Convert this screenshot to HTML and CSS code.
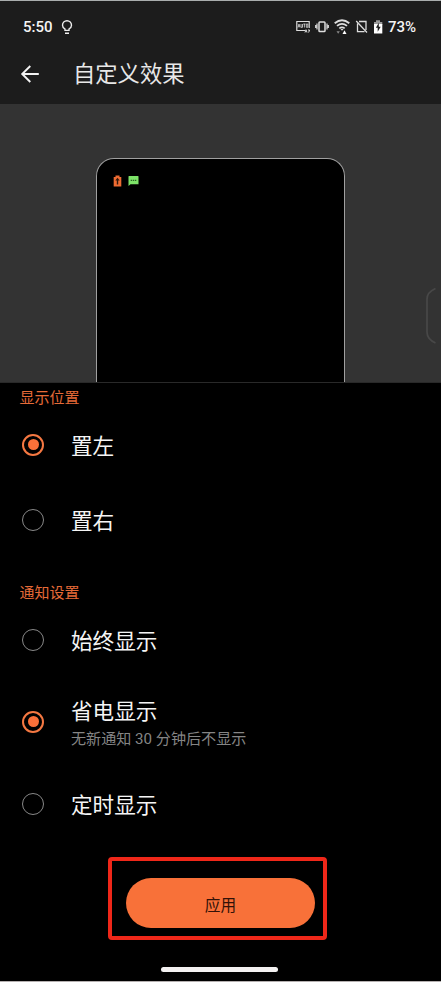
FILE: index.html
```html
<!DOCTYPE html>
<html lang="zh-CN">
<head>
<meta charset="utf-8">
<title>自定义效果</title>
<link rel="stylesheet" href="styles.css">
</head>
<body>
<div class="screen">
  <header class="header">
    <div class="status">
      <span class="clock">5:50</span>
      <svg class="bulb" width="12" height="15" viewBox="0 0 12 15" fill="none" stroke="#eee" stroke-width="1.4"><path d="M4 10.4V9C2.400 8.100 1.500 6.800 1.500 5.200a4.500 4.500 0 0 1 9 0C10.500 6.800 9.600 8.100 8 9v1.400zM4 13.300h4"/></svg>
      <svg class="tray" width="90" height="18" viewBox="0 0 90 18" fill="none" stroke="#ddd">
        <path d="M10 12.500H1.800V3.500H14.200V10" stroke-width="1.200"/>
        <path d="M3 9.500l1-3.500 1 3.500M3.500 8.300h1M6 6v3.300h1.500V6M8.300 6h2.200M9.400 6v3.500M11.300 6h1.500v3.300h-1.500z" stroke-width=".8"/>
        <path d="M10 14.500l1-2.800 1 2.800M13 12h1.600l-1 2.500" stroke-width="1"/>
        <rect x="24" y="4" width="6" height="9.500" rx=".8" stroke-width="1.500"/>
        <path d="M22 5.500v6M32 5.500v6M20.700 7v3M33.300 7v3" stroke-width="1.200"/>
        <path d="M39.700 5.200q7.300-6 14.600 0M42 7.900q5-4 10 0M44.300 10.400q2.700-2 5.400 0" stroke-width="1.800"/>
        <path d="M45.500 11l1.500 1.800 1.500-1.800z" fill="#ddd" stroke="none"/>
        <path d="M41.500 13.300h3.400l-1.700 2.400z" fill="#888" stroke="none"/>
        <path d="M47.500 16l2-3.700 2 3.700z" fill="#fff" stroke="none"/>
        <path d="M64 3.500H71v8.500M69.500 13.600h-7V5.500M61.200 3L72 14.500" stroke-width="1.300"/>
        <path d="M79 4h2V2.200h4V4h2.300v3H79z" fill="#999" stroke="none"/>
        <path d="M79 6h8.300v9.500H79z" fill="#fff" stroke="none"/>
        <path d="M83.800 4.800L80.900 9.700h1.800v4L85.700 8.700h-1.900z" fill="#1c1c1c" stroke="none"/>
      </svg>
      <span class="percent">73%</span>
    </div>
    <div class="titlebar">
      <svg class="back" width="20" height="18" viewBox="0 0 20 18" fill="none" stroke="#f2f2f2" stroke-width="1.900"><path d="M18.800 9H2.200M10.300 1L2.200 9l8.100 8"/></svg>
      <h1 class="title">自定义效果</h1>
    </div>
  </header>

  <section class="preview">
    <div class="phone">
      <svg width="9" height="12" viewBox="0 0 9 12"><path d="M.7 2h1.800V.5h4V2h1.800v9.500H.7z" fill="#ed6b32"/><path d="M4.500 2.700L2.300 5.500h1.500v4h1.400v-4h1.500z" fill="#32180c"/></svg>
      <svg width="11" height="12" viewBox="0 0 11 12"><path d="M1 1h9a.5.5 0 0 1 .5.500v7.700H2.500L.5 11V1.500a.5.5 0 0 1 .5-.5z" fill="#7de368"/><path d="M2.700 4.700h1.400v1.300H2.700zM4.800 4.700h1.400v1.300H4.800zM6.900 4.700h1.400v1.300H6.900z" fill="#2b6624"/></svg>
    </div>
    <svg class="edge-handle" width="12" height="58" viewBox="0 0 12 58" fill="none" stroke="#484848" stroke-width="1.700"><path d="M10.500 1.500C5 4 2 7 2 12v33c0 5 3 8.500 8.500 11"/></svg>
  </section>

  <main class="options">
    <h2 class="label label-first">显示位置</h2>
    <div class="row"><span class="radio checked"></span><span class="name">置左</span></div>
    <div class="row"><span class="radio"></span><span class="name">置右</span></div>
    <h2 class="label label-second">通知设置</h2>
    <div class="row"><span class="radio"></span><span class="name">始终显示</span></div>
    <div class="row row-tall"><span class="radio checked"></span><div class="copy"><span class="name">省电显示</span><span class="hint">无新通知 30 分钟后不显示</span></div></div>
    <div class="row"><span class="radio"></span><span class="name">定时显示</span></div>
  </main>

  <footer class="footer">
    <div class="highlight"><button class="apply">应用</button></div>
    <div class="homebar"></div>
  </footer>
</div>
</body>
</html>
```
FILE: styles.css
```css
* { box-sizing: border-box; }
body {
  margin: 0;
  background: #000;
  font-family: Roboto, "Noto Sans CJK SC", sans-serif;
}
.screen {
  width: 441px;
  height: 982px;
  display: flex;
  flex-direction: column;
  overflow: hidden;
  border-bottom: 1px solid #b5b0b0;
}
.header {
  height: 104px;
  background: #1c1c1c;
  border-top: 1px solid #a9adad;
}
.status {
  display: flex;
  align-items: center;
  height: 36px;
  margin-top: 8px;
  padding: 0 25px 0 23px;
  color: #f4f4f4;
  font-size: 15px;
  font-weight: 500;
}
.clock { width: 30px; }
.bulb { margin-left: 8px; }
.tray { margin-left: auto; }
.percent { width: 28px; margin-left: 3px; white-space: nowrap; }
.titlebar {
  display: flex;
  align-items: center;
  height: 58px;
  padding-left: 20px;
}
.title {
  margin: 0 0 0 33px;
  color: #e8e8e8;
  font-size: 22.300px;
  line-height: 32px;
  font-weight: 400;
}
.preview {
  position: relative;
  height: 279px;
  padding-top: 54px;
  background: #333;
  border-bottom: 1px solid #292929;
}
.phone {
  display: flex;
  gap: 6px;
  width: 249px;
  height: 224px;
  margin-left: 96px;
  padding: 16px 0 0 16px;
  background: #000;
  border: 1px solid #a0a0a0;
  border-bottom: 0;
  border-radius: 18px 18px 0 0;
}
.edge-handle { position: absolute; right: 4px; top: 183px; }
.label {
  margin: 0;
  padding-left: 19.500px;
  color: #e66b38;
  font-size: 15px;
  font-weight: 400;
  line-height: 22px;
}
.label-first { height: 24px; padding-top: 4px; }
.label-second { height: 45px; padding-top: 25px; }
.row {
  display: flex;
  align-items: center;
  height: 75px;
  padding-left: 22px;
}
.row-tall { height: 89px; }
.radio {
  display: flex;
  align-items: center;
  justify-content: center;
  width: 22px;
  height: 22px;
  margin-right: 27px;
  border: 1px solid #888;
  border-radius: 50%;
}
.checked { border: 2px solid #f57842; }
.checked::after {
  content: "";
  width: 11px;
  height: 11px;
  border-radius: 50%;
  background: #fa7039;
}
.name { padding-top: 5px; color: #f5f5f5; font-size: 21.600px; line-height: 30px; }
.copy { display: flex; flex-direction: column; }
.hint { color: #858585; font-size: 15.100px; line-height: 24px; }
.footer {
  flex: 1;
  display: flex;
  flex-direction: column;
  align-items: flex-start;
  padding: 16px 0 0 108px;
}
.highlight {
  width: 219px;
  height: 83px;
  padding: 17px 0 0 14px;
  border: 4px solid #ef2719;
  border-radius: 4px;
}
.apply {
  display: block;
  width: 189px;
  height: 50px;
  padding: 2px 0 0;
  border: 0;
  border-radius: 25px;
  background: #f87139;
  color: #321108;
  font: 400 15.700px "Noto Sans CJK SC", sans-serif;
}
.homebar {
  width: 117px;
  height: 5px;
  margin: 27px 0 0 53px;
  border-radius: 3px;
  background: #f3f1f1;
}
```
